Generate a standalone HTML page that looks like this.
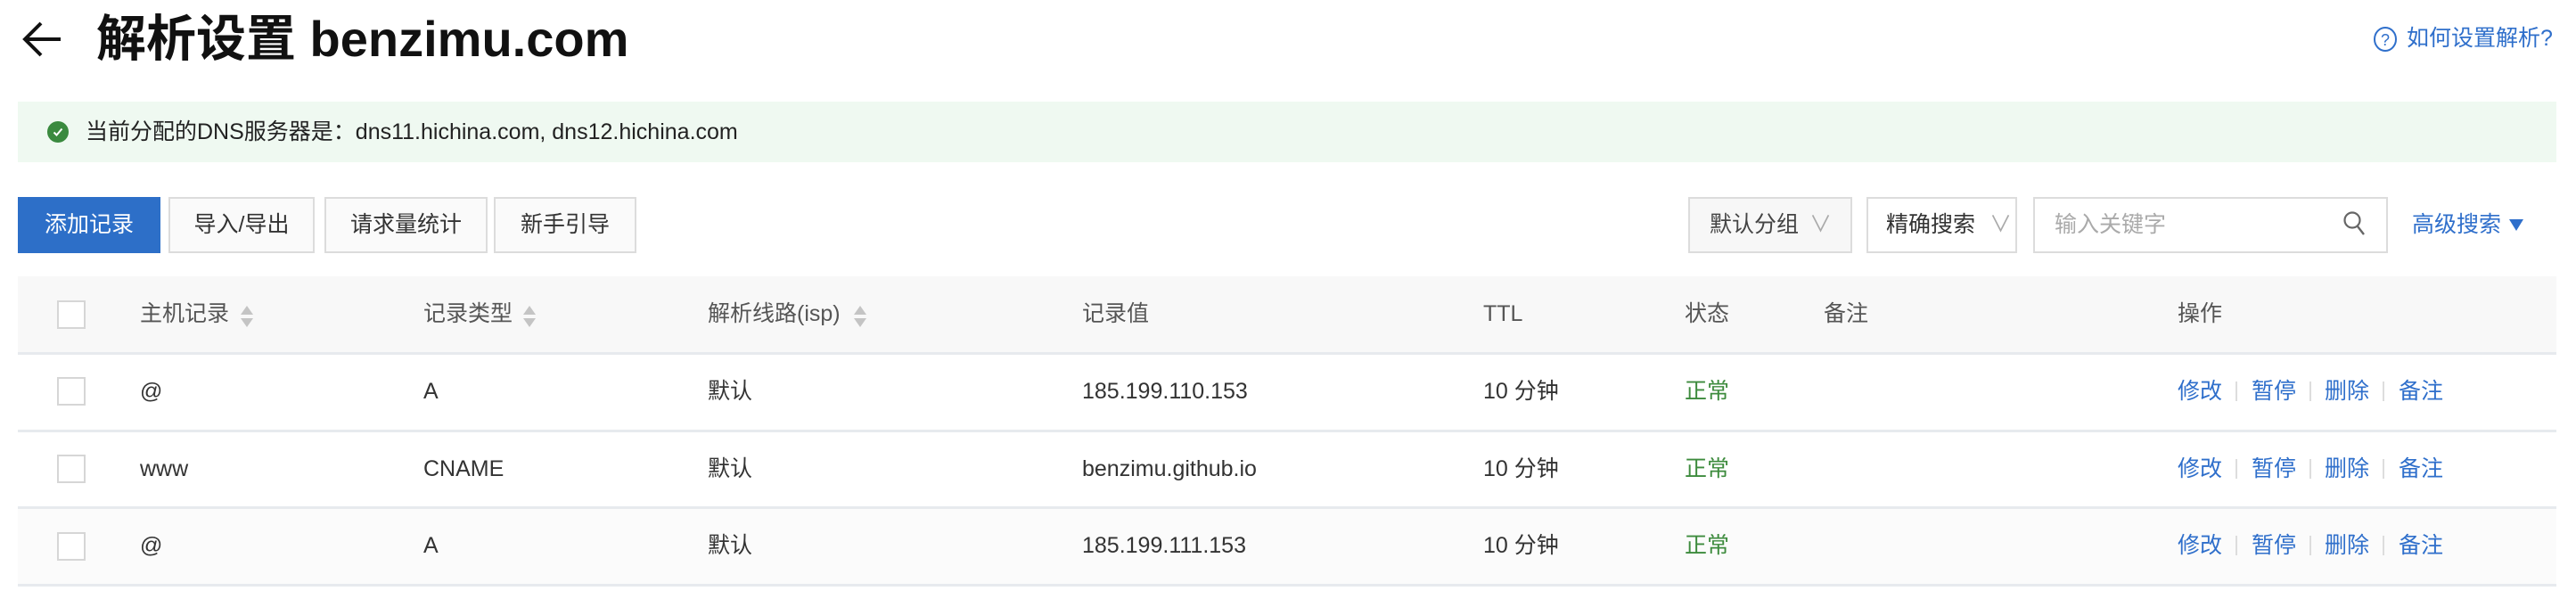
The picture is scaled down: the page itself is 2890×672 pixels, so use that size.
<!DOCTYPE html>
<html><head><meta charset="utf-8"><style>
*{margin:0;padding:0;box-sizing:border-box}
body{width:2890px;height:672px;background:#fff;font-family:"Liberation Sans","Noto Sans CJK SC",sans-serif;position:relative;overflow:hidden;color:#333;font-size:25px}
.a{position:absolute;white-space:nowrap}
.title{left:108px;top:8px;font-size:56px;font-weight:bold;color:#111;line-height:72px}
.banner{left:20px;top:114px;width:2848px;height:68px;background:#eff9f1}
.btn{position:absolute;top:221px;height:63px;border:2px solid #dcdcdc;background:#fafafa;color:#333;font-size:25px;line-height:59px;text-align:center}
.thead{left:20px;top:310px;width:2848px;height:86px;background:#f8f8f8}
.line{position:absolute;left:20px;width:2848px;height:3px;background:#e7eaee}
.cb{position:absolute;left:64px;width:32px;height:32px;border:2px solid #d6d6d6;background:#fff}
.h{color:#555}
.sort{position:absolute;width:0;height:0;border-left:7px solid transparent;border-right:7px solid transparent}
.blue{color:#2f6fcb}
.green{color:#3d8b3d}
.sep{position:absolute;width:2px;height:22px;background:#ddd}
</style></head><body>
<svg class="a" style="left:24px;top:20px" width="48" height="48" viewBox="0 0 48 48"><path d="M44 24H6M22 6L4 24l18 18" fill="none" stroke="#111" stroke-width="4"/></svg>
<div class="a title">解析设置 benzimu.com</div>
<svg class="a" style="left:2662px;top:29px" width="28" height="30" viewBox="0 0 28 30"><ellipse cx="14" cy="15" rx="12" ry="13" fill="none" stroke="#2f6fcb" stroke-width="2"/><text x="14" y="22" font-size="18" fill="#2f6fcb" text-anchor="middle" font-family="Liberation Sans">?</text></svg>
<div class="a blue" style="left:2700px;top:27px;font-size:25px;line-height:32px">如何设置解析?</div>
<div class="a banner"></div>
<svg class="a" style="left:53px;top:136px" width="24" height="24" viewBox="0 0 24 24"><circle cx="12" cy="12" r="12" fill="#3a8a3f"/><path d="M7.5 12.5l3 3 6-7" fill="none" stroke="#fff" stroke-width="2"/></svg>
<div class="a" style="left:96px;top:132px;line-height:32px;color:#222">当前分配的DNS服务器是：dns11.hichina.com, dns12.hichina.com</div>
<div class="btn" style="left:20px;width:160px;background:#2d6fc8;border-color:#2d6fc8;color:#fff">添加记录</div>
<div class="btn" style="left:189px;width:164px">导入/导出</div>
<div class="btn" style="left:364px;width:183px">请求量统计</div>
<div class="btn" style="left:554px;width:160px">新手引导</div>
<div class="btn" style="left:1894px;width:184px;background:#f7f7f7;text-align:left;padding-left:22px;color:#444">默认分组<span style="position:absolute;left:134px;color:#aaa">∨</span></div>
<div class="btn" style="left:2094px;width:169px;background:#fff;text-align:left;padding-left:20px;color:#333">精确搜索<span style="position:absolute;left:136px;color:#aaa">∨</span></div>
<div class="btn" style="left:2281px;width:398px;background:#fff;text-align:left;padding-left:22px;color:#aaa">输入关键字</div>
<svg class="a" style="left:2628px;top:236px" width="28" height="30" viewBox="0 0 28 30"><circle cx="11" cy="11" r="8.5" fill="none" stroke="#666" stroke-width="2.2"/><path d="M17 18l7 9" stroke="#666" stroke-width="2.4"/></svg>
<div class="a blue" style="left:2706px;top:236px;line-height:32px">高级搜索</div>
<div class="a" style="left:2815px;top:246px;width:0;height:0;border-left:8px solid transparent;border-right:8px solid transparent;border-top:13px solid #2f6fcb"></div>

<div class="a thead"></div>
<div class="line" style="top:395px"></div>
<div class="a" style="left:20px;top:571px;width:2848px;height:85px;background:#fbfbfb"></div>
<div class="line" style="top:482px"></div>
<div class="line" style="top:568px"></div>
<div class="line" style="top:655px"></div>

<div class="cb" style="top:337px"></div>
<div class="cb" style="top:423px"></div>
<div class="cb" style="top:510px"></div>
<div class="cb" style="top:597px"></div>

<div class="a h" style="left:157px;top:336px;line-height:32px">主机记录</div>
<div class="a h" style="left:475px;top:336px;line-height:32px">记录类型</div>
<div class="a h" style="left:794px;top:336px;line-height:32px">解析线路(isp)</div>
<div class="a h" style="left:1214px;top:336px;line-height:32px">记录值</div>
<div class="a h" style="left:1664px;top:336px;line-height:32px">TTL</div>
<div class="a h" style="left:1890px;top:336px;line-height:32px">状态</div>
<div class="a h" style="left:2046px;top:336px;line-height:32px">备注</div>
<div class="a h" style="left:2443px;top:336px;line-height:32px">操作</div>
<div class="sort" style="left:270px;top:343px;border-bottom:10px solid #c4c4c4"></div>
<div class="sort" style="left:270px;top:357px;border-top:10px solid #c4c4c4"></div>
<div class="sort" style="left:587px;top:343px;border-bottom:10px solid #c4c4c4"></div>
<div class="sort" style="left:587px;top:357px;border-top:10px solid #c4c4c4"></div>
<div class="sort" style="left:958px;top:343px;border-bottom:10px solid #c4c4c4"></div>
<div class="sort" style="left:958px;top:357px;border-top:10px solid #c4c4c4"></div>

<div class="a" style="left:157px;top:423px;line-height:32px">@</div>
<div class="a" style="left:475px;top:423px;line-height:32px">A</div>
<div class="a" style="left:794px;top:423px;line-height:32px">默认</div>
<div class="a" style="left:1214px;top:423px;line-height:32px">185.199.110.153</div>
<div class="a" style="left:1664px;top:423px;line-height:32px">10 分钟</div>
<div class="a green" style="left:1890px;top:423px;line-height:32px">正常</div>

<div class="a" style="left:157px;top:510px;line-height:32px">www</div>
<div class="a" style="left:475px;top:510px;line-height:32px">CNAME</div>
<div class="a" style="left:794px;top:510px;line-height:32px">默认</div>
<div class="a" style="left:1214px;top:510px;line-height:32px">benzimu.github.io</div>
<div class="a" style="left:1664px;top:510px;line-height:32px">10 分钟</div>
<div class="a green" style="left:1890px;top:510px;line-height:32px">正常</div>

<div class="a" style="left:157px;top:596px;line-height:32px">@</div>
<div class="a" style="left:475px;top:596px;line-height:32px">A</div>
<div class="a" style="left:794px;top:596px;line-height:32px">默认</div>
<div class="a" style="left:1214px;top:596px;line-height:32px">185.199.111.153</div>
<div class="a" style="left:1664px;top:596px;line-height:32px">10 分钟</div>
<div class="a green" style="left:1890px;top:596px;line-height:32px">正常</div>

<div class="a blue" style="left:2443px;top:423px;line-height:32px">修改</div><div class="sep" style="left:2508px;top:428px"></div>
<div class="a blue" style="left:2526px;top:423px;line-height:32px">暂停</div><div class="sep" style="left:2591px;top:428px"></div>
<div class="a blue" style="left:2608px;top:423px;line-height:32px">删除</div><div class="sep" style="left:2673px;top:428px"></div>
<div class="a blue" style="left:2691px;top:423px;line-height:32px">备注</div>

<div class="a blue" style="left:2443px;top:510px;line-height:32px">修改</div><div class="sep" style="left:2508px;top:515px"></div>
<div class="a blue" style="left:2526px;top:510px;line-height:32px">暂停</div><div class="sep" style="left:2591px;top:515px"></div>
<div class="a blue" style="left:2608px;top:510px;line-height:32px">删除</div><div class="sep" style="left:2673px;top:515px"></div>
<div class="a blue" style="left:2691px;top:510px;line-height:32px">备注</div>

<div class="a blue" style="left:2443px;top:596px;line-height:32px">修改</div><div class="sep" style="left:2508px;top:601px"></div>
<div class="a blue" style="left:2526px;top:596px;line-height:32px">暂停</div><div class="sep" style="left:2591px;top:601px"></div>
<div class="a blue" style="left:2608px;top:596px;line-height:32px">删除</div><div class="sep" style="left:2673px;top:601px"></div>
<div class="a blue" style="left:2691px;top:596px;line-height:32px">备注</div>
</body></html>
